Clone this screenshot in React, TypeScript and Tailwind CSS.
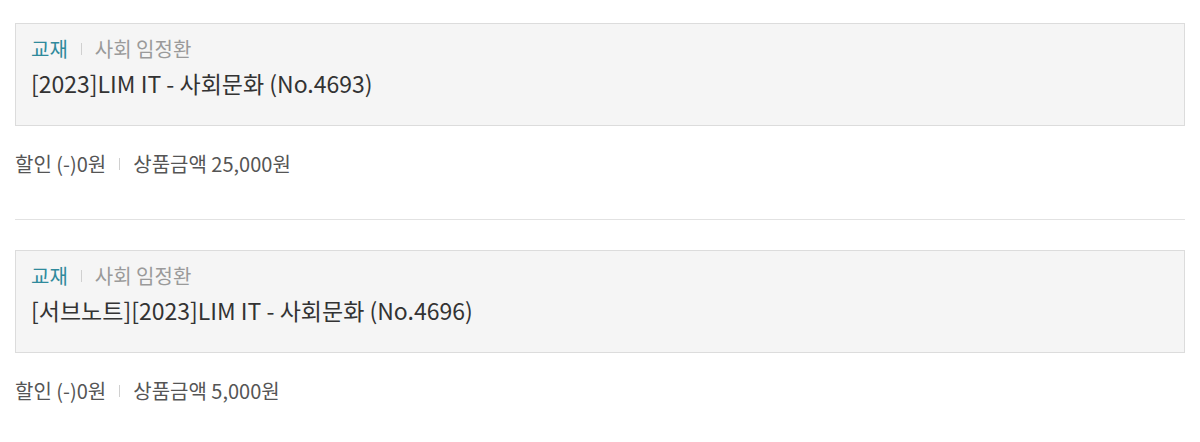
const font = { fontFamily: '"Noto Sans CJK KR", "Noto Sans", sans-serif' };

interface Item {
  category: string;
  subject: string;
  title: string;
  discount: string;
  price: string;
}

const items: Item[] = [
  { category: '교재', subject: '사회 임정환', title: '[2023]LIM IT - 사회문화 (No.4693)', discount: '0원', price: '25,000원' },
  { category: '교재', subject: '사회 임정환', title: '[서브노트][2023]LIM IT - 사회문화 (No.4696)', discount: '0원', price: '5,000원' },
];

function Sep() {
  return <span className="inline-block w-px h-[12px] bg-[#d0d0d0] mx-[13px]" />;
}

function OrderItem({ item }: { item: Item }) {
  return (
    <div>
      <div className="border border-[#dcdcdc] bg-[#f5f5f5] px-[15px] pt-[12px] pb-[26px]">
        <div className="flex items-center h-[26px] text-[20px] leading-[26px]">
          <span className="text-[#2f8a9c]">{item.category}</span>
          <Sep />
          <span className="text-[#9a9a9a]">{item.subject}</span>
        </div>
        <div className="mt-[5px] text-[23px] leading-[32px] text-[#333]">{item.title}</div>
      </div>
      <div className="mt-[24px] flex items-center h-[28px] text-[20px] leading-[28px] text-[#555]">
        <span>할인 (-){item.discount}</span>
        <Sep />
        <span>상품금액 {item.price}</span>
      </div>
    </div>
  );
}

export default function App() {
  return (
    <div className="w-[1200px] h-[442px] bg-white px-[15px] pt-[23px] overflow-hidden" style={font}>
      <OrderItem item={items[0]} />
      <div className="mt-[41px] mb-[30px] h-px bg-[#e2e2e2]" />
      <OrderItem item={items[1]} />
    </div>
  );
}
